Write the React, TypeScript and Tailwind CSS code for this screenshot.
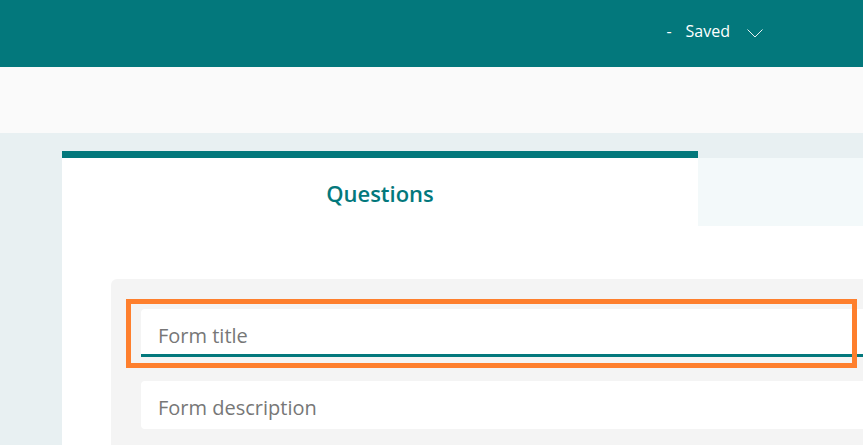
export default function App() {
  return (
    <div className="w-[863px] h-[445px] overflow-hidden bg-[#e8f0f2] font-['Open_Sans',sans-serif]">
      <header className="h-[67px] bg-[#03787c] flex items-center justify-end pr-[100px] text-white">
        <div className="flex items-center pb-[5px]">
          <span className="text-[16px] mr-[14px]">-</span>
          <span className="text-[16px]">Saved</span>
          <svg className="ml-[17px] mt-[5px]" width="16" height="9" viewBox="0 0 16 9" fill="none" stroke="#e6f2f2" strokeWidth="1">
            <path d="M0.5 0.5 L8 8 L15.5 0.5" />
          </svg>
        </div>
      </header>
      <div className="h-[66px] bg-[#fafafa]" />
      <div className="pt-[18px] pl-[62px]">
        <div className="w-[1000px] bg-white">
          <div className="flex h-[75px]">
            <div className="w-[636px] border-t-[7px] border-[#03787c] flex items-center justify-center">
              <span className="text-[22px] font-semibold text-[#03787c] pt-[3px]">Questions</span>
            </div>
            <div className="flex-1 bg-[#e8f0f2]">
              <div className="mt-[7px] h-[68px] bg-[#f3f9fa]" />
            </div>
          </div>
          <div className="pt-[53px] pl-[49px]">
            <div className="bg-[#f4f4f4] rounded-tl-[6px] pt-[30px] pl-[30px] pb-[40px]">
              <div className="relative">
                <div className="h-[48px] bg-white rounded-t-[4px] border-b-[3px] border-[#03787c] pl-[17px] flex items-center">
                  <span className="text-[20px] text-[#777777] pt-[9px]">Form title</span>
                </div>
                <div className="absolute left-[-15px] top-[-10px] w-[731px] h-[69px] border-[5px] border-[#fe7f2d]" />
              </div>
              <div className="mt-[24px] h-[48px] bg-white rounded-[4px] pl-[17px] flex items-center">
                <span className="text-[20px] text-[#777777] pt-[6px]">Form description</span>
              </div>
            </div>
          </div>
        </div>
      </div>
    </div>
  );
}
